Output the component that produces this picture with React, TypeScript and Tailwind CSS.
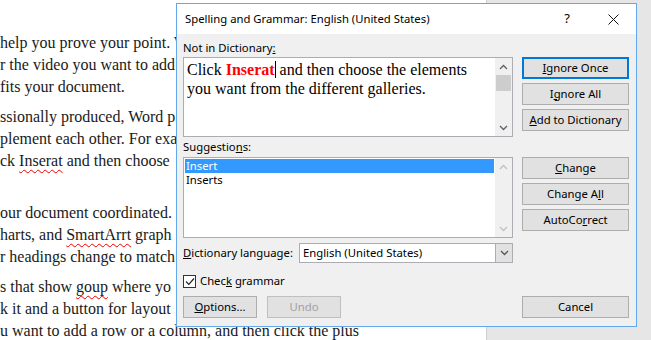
import clsx from 'clsx'

const squiggle = 'underline decoration-wavy decoration-[#e00] decoration-1 underline-offset-[3px]'

const docLines: (string | JSX.Element)[][] = [
  ['help you prove your point. W'],
  ['r the video you want to add'],
  [' fits your document.'],
  ['ssionally produced, Word p'],
  ['plement each other. For exa'],
  ['ck ', <span key="a" className={squiggle}>Inserat</span>, ' and then choose'],
  [''],
  ['our document coordinated.'],
  ['harts, and ', <span key="b" className={squiggle}>SmartArrt</span>, ' graph'],
  ['r headings change to match'],
  ['s that show ', <span key="c" className={squiggle}>goup</span>, ' where yo'],
  ['k it and a button for layout'],
  ['u want to add a row or a column, and then click the plus'],
]

function Chevron({ dir, color }: { dir: 'up' | 'down'; color: string }) {
  return (
    <svg width="9" height="6" viewBox="0 0 9 6">
      <path
        d={dir === 'up' ? 'M1 5 L4.5 1.5 L8 5' : 'M1 1 L4.5 4.5 L8 1'}
        fill="none"
        stroke={color}
        strokeWidth="1.3"
      />
    </svg>
  )
}

function Scrollbar({ active }: { active: boolean }) {
  const c = active ? '#606060' : '#c0c0c0'
  return (
    <div className="flex w-[17px] flex-col bg-[#f0f0f0]">
      <div className="flex h-[17px] items-center justify-center">
        <Chevron dir="up" color={c} />
      </div>
      <div className="flex-1">
        {active && <div className="mx-[1px] h-[16px] bg-[#cdcdcd]" />}
      </div>
      <div className="flex h-[17px] items-center justify-center">
        <Chevron dir="down" color={c} />
      </div>
    </div>
  )
}

function Btn({ children, className }: { children: React.ReactNode; className?: string }) {
  return (
    <div
      className={clsx(
        'flex h-[22px] items-center justify-center whitespace-nowrap border bg-[#e1e1e1]',
        className ?? 'border-[#adadad]',
      )}
    >
      {children}
    </div>
  )
}

export default function App() {
  return (
    <div className="relative h-[340px] w-[651px] overflow-hidden bg-[#e6e6e6]">
      {/* document page */}
      <div className="h-full w-[487px] overflow-hidden border-r border-[#d0d0d0] bg-white pt-[32px] font-['Liberation_Serif',serif] text-[16px] leading-[22px] text-[#1a1a1a]">
        {docLines.map((l, i) => (
          <div
            key={i}
            className={clsx(
              'h-[22px] whitespace-nowrap',
              (i === 3 || i === 7 || i === 10) && 'mt-[8px]',
            )}
          >
            {l}
          </div>
        ))}
      </div>

      {/* dialog */}
      <div className="absolute left-[176px] top-[3px] flex h-[324px] w-[461px] flex-col border border-[#64a8ec] bg-[#f0f0f0] font-['Noto_Sans',sans-serif] text-[11.3px] text-black">
        <div className="flex h-[30px] items-center bg-white pl-[8px]">
          <span className="flex-1">Spelling and Grammar: English (United States)</span>
          <span className="w-[46px] text-center text-[13px]">?</span>
          <span className="flex w-[46px] items-center justify-center">
            <svg width="11" height="11" viewBox="0 0 11 11">
              <path d="M0.5 0.5 L10.5 10.5 M10.5 0.5 L0.5 10.5" stroke="#111" strokeWidth="1" />
            </svg>
          </span>
        </div>

        <div className="flex flex-1 flex-col pl-[6px] pr-[7px]">
          <div className="flex h-[23px] items-center pt-[5px]">
            Not in Dictionary<u>:</u>
          </div>
          <div className="flex gap-[9px]">
            <div className="flex h-[80px] w-[330px] border border-[#abadb3] bg-white">
              <div className="flex-1 pl-[3px] pt-[2px] font-['Liberation_Serif',serif] text-[16px] leading-[19px]">
                Click <b className="text-[#f00]">Inserat</b>
                <span className="inline-block h-[17px] w-px bg-black align-[-3px]" /> and then choose the elements
                <br />
                you want from the different galleries.
              </div>
              <Scrollbar active />
            </div>
            <div className="flex flex-1 flex-col gap-[4px]">
              <Btn className="border-2 border-[#0078d7]">
                <span><u>I</u>gnore Once</span>
              </Btn>
              <Btn>
                <span>I<u>g</u>nore All</span>
              </Btn>
              <Btn>
                <span><u>A</u>dd to Dictionary</span>
              </Btn>
            </div>
          </div>

          <div className="flex h-[20px] items-center">
            Suggestio<u>n</u>s:
          </div>
          <div className="flex gap-[9px]">
            <div className="flex h-[81px] w-[330px] border border-[#abadb3] bg-white">
              <div className="flex-1 p-[1px] leading-[14px]">
                <div className="bg-[#3399ff] pl-[1px] text-white">Insert</div>
                <div className="pl-[1px]">Inserts</div>
              </div>
              <Scrollbar active={false} />
            </div>
            <div className="flex flex-1 flex-col gap-[4px]">
              <Btn>
                <span><u>C</u>hange</span>
              </Btn>
              <Btn>
                <span>Change A<u>l</u>l</span>
              </Btn>
              <Btn>
                <span>AutoCo<u>r</u>rect</span>
              </Btn>
            </div>
          </div>

          <div className="mt-[5px] flex h-[20px] w-[330px] items-center">
            <span className="w-[116px] whitespace-nowrap">
              <u>D</u>ictionary language:
            </span>
            <div className="flex h-full flex-1 border border-[#abadb3] bg-white">
              <span className="flex flex-1 items-center pl-[3px]">English (United States)</span>
              <span className="flex w-[17px] items-center justify-center border-l border-[#adadad] bg-[#e1e1e1]">
                <Chevron dir="down" color="#555" />
              </span>
            </div>
          </div>

          <div className="mt-[12px] flex h-[13px] items-center gap-[4px]">
            <span className="flex h-[13px] w-[13px] items-center justify-center border border-[#333] bg-white">
              <svg width="10" height="9" viewBox="0 0 10 9">
                <path d="M1 4.5 L3.8 7.3 L9 1.5" fill="none" stroke="#222" strokeWidth="1.2" />
              </svg>
            </span>
            <span>
              Chec<u>k</u> grammar
            </span>
          </div>

          <div className="mt-[8px] flex gap-[10px]">
            <Btn className="w-[74px] border-[#adadad]">
              <span><u>O</u>ptions...</span>
            </Btn>
            <Btn className="w-[74px] border-[#bfbfbf] text-[#a0a0a0]">
              <span>Undo</span>
            </Btn>
            <div className="flex-1" />
            <Btn className="w-[107px] border-[#adadad]">
              <span>Cancel</span>
            </Btn>
          </div>
        </div>
      </div>
    </div>
  )
}
